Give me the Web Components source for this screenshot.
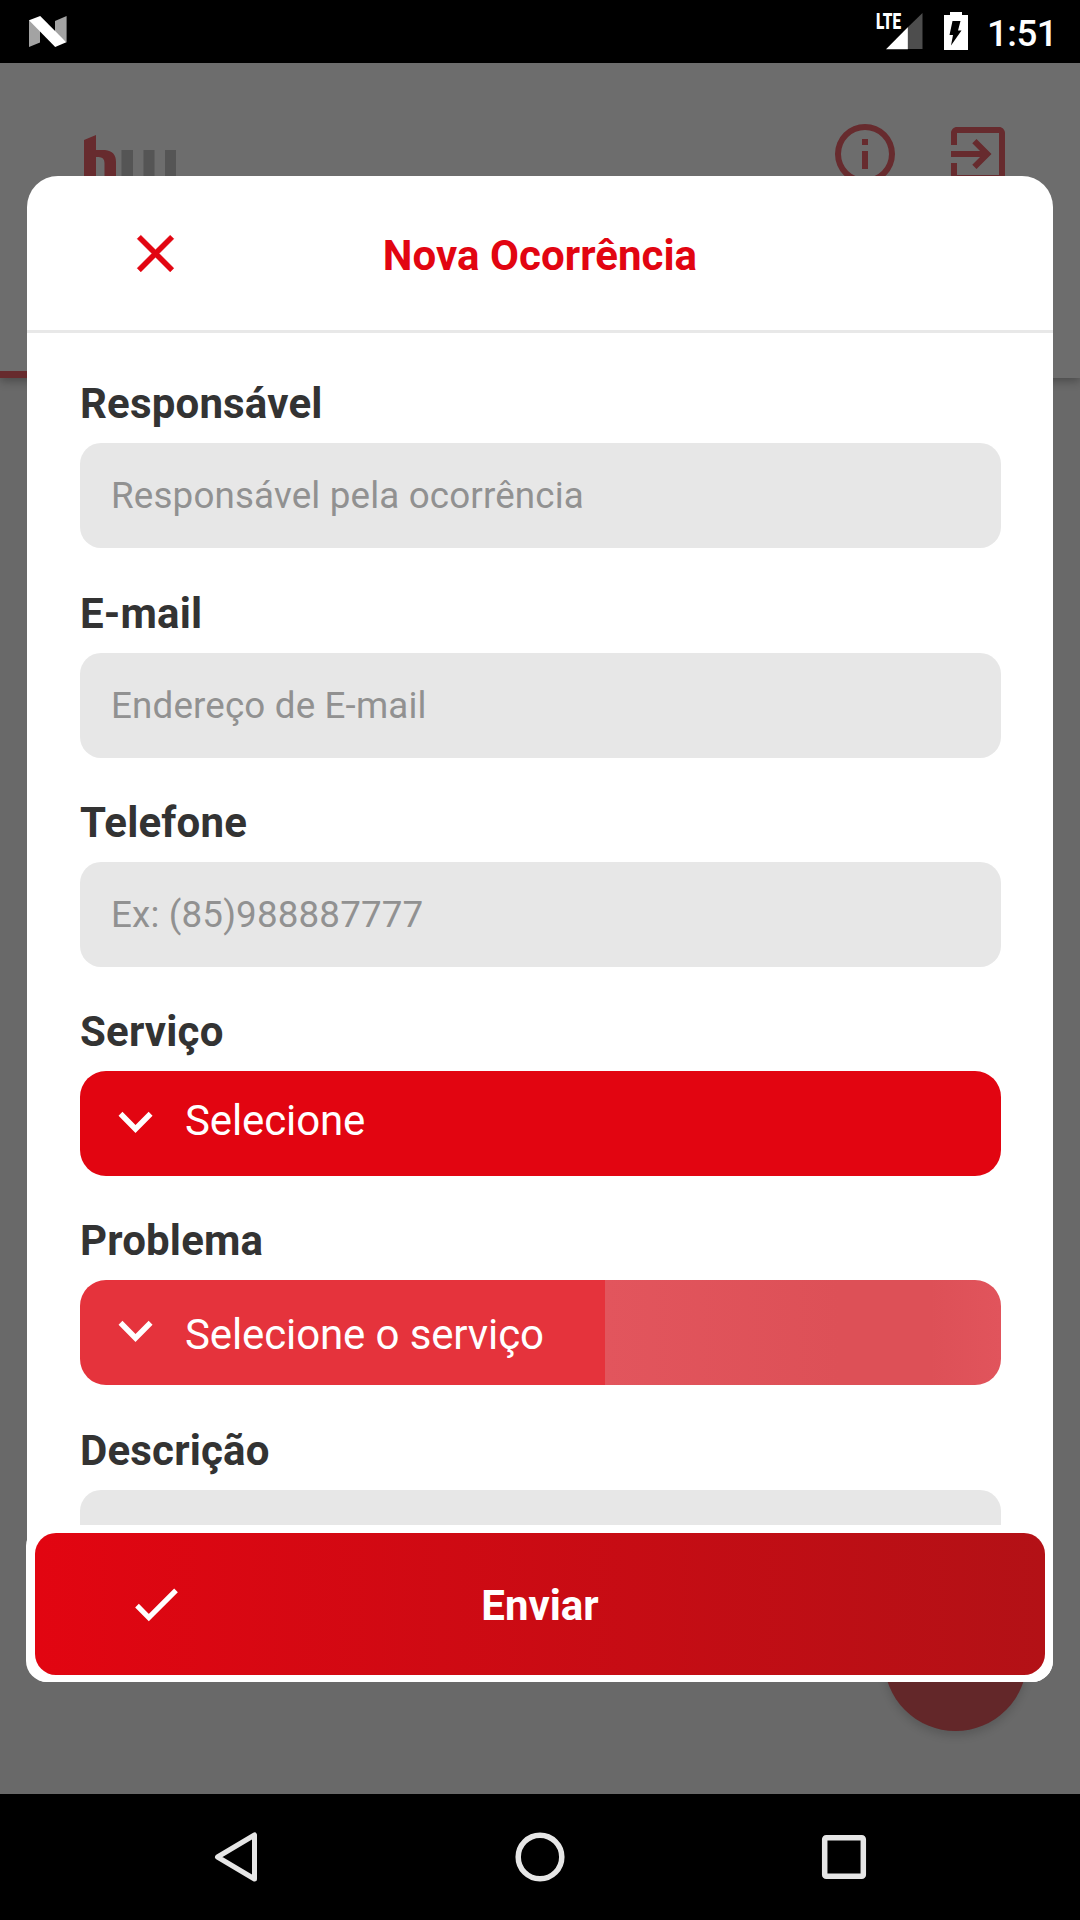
<!DOCTYPE html>
<html lang="pt-BR">
<head>
<meta charset="utf-8">
<title>Nova Ocorrência</title>
<style>
	html, body {
		margin: 0;
		height: 100%;
	}
	body {
		font-family: Roboto, "Liberation Sans", sans-serif;
		background: #000;
		overflow: hidden;
	}
</style>
</head>
<body>
<phone-screen>
	<status-bar slot="status" time="1:51"></status-bar>
	<app-header></app-header>
	<fab-button></fab-button>
	<modal-card slot="modal" heading="Nova Ocorrência">
		<form-field label="Responsável"><text-field>Responsável pela ocorrência</text-field></form-field>
		<form-field label="E-mail"><text-field>Endereço de E-mail</text-field></form-field>
		<form-field label="Telefone"><text-field>Ex: (85)988887777</text-field></form-field>
		<form-field label="Serviço"><select-button>Selecione</select-button></form-field>
		<form-field label="Problema"><select-button disabled>Selecione o serviço</select-button></form-field>
		<form-field label="Descrição"><text-field></text-field></form-field>
		<submit-button slot="footer">Enviar</submit-button>
	</modal-card>
	<nav-bar slot="nav"></nav-bar>
</phone-screen>

<script>
// Attaches an open shadow root to the element and fills it with the markup
function render(el, html) {
	const template = document.createElement('template');
	template.innerHTML = html;
	el.attachShadow({mode: 'open'}).appendChild(template.content.cloneNode(true));
}

// Whole device screen: status bar, app content, navigation bar
class PhoneScreen extends HTMLElement {
	constructor() {
		super();
		render(this, `
			<style>
				:host {
					display: flex;
					flex-direction: column;
					width: 1080px;
					height: 1920px;
					background: #000;
				}
				main {
					flex: 1;
					position: relative;
					background: #696969;
				}
			</style>
			<slot name="status"></slot>
			<main>
				<slot></slot>
				<slot name="modal"></slot>
			</main>
			<slot name="nav"></slot>
		`);
	}
}
customElements.define('phone-screen', PhoneScreen);

class StatusBar extends HTMLElement {
	constructor() {
		super();
		render(this, `
			<style>
				:host {
					display: flex;
					height: 63px;
					box-sizing: border-box;
					padding: 0 23px 0 28px;
					color: #fff;
				}
				.icons {
					display: flex;
					margin-left: auto;
				}
				svg { display: block; }
				.battery { margin: 0 18px 0 20px; }
				.time {
					font-size: 36.75px;
					font-weight: 500;
					line-height: 43px;
					letter-spacing: -.6px;
					padding-top: 12px;
				}
			</style>
			<svg width="40" height="63" viewBox="0 0 40 63">
				<path fill="#a3a3a3" d="M1 20l11 7v15.500L1 47zM27 21l11.600-5v26.500L27 33z"/>
				<path fill="#fff" d="M1 20.200L12.200 16 38.300 42.300 27.200 47z"/>
			</svg>
			<div class="icons">
				<svg width="48" height="63" viewBox="0 0 48 63">
					<path fill="#4d4d4d" d="M47.500 13v36H32V28z"/>
					<path fill="#fff" d="M32.800 27.300V49.300H11z"/>
					<text x="1" y="29" font-size="21.500" font-weight="900" fill="#fff" textLength="25" lengthAdjust="spacingAndGlyphs">LTE</text>
				</svg>
				<svg class="battery" width="26" height="63" viewBox="0 0 26 63">
					<path fill="#fff" d="M7 12h12v3h6v35H1V15h6z"/>
					<path fill="#000" d="M9.500 21h8l-2.500 9.500h3.500L8 45.500l2-10.500H6.500z"/>
				</svg>
				<span class="time"></span>
			</div>
		`);
		this.shadowRoot.querySelector('.time').textContent = this.getAttribute('time');
	}
}
customElements.define('status-bar', StatusBar);

// App bar behind the modal, with the selected tab indicator at the bottom
class AppHeader extends HTMLElement {
	constructor() {
		super();
		render(this, `
			<style>
				:host {
					display: flex;
					flex-direction: column;
					justify-content: space-between;
					height: 315px;
					background: #6d6d6d;
					box-shadow: 0 3px 9px rgba(0, 0, 0, .3);
				}
				.bar {
					display: flex;
					align-items: flex-start;
					padding: 55px 66px 0 84px;
				}
				.logo { margin-top: 16px; }
				.info { margin-left: auto; }
				.exit { margin-left: 41px; }
				.indicator {
					width: 540px;
					height: 7px;
					background: #672b2e;
				}
				svg { display: block; }
			</style>
			<div class="bar">
				<svg class="logo" width="94" height="56" viewBox="0 0 94 56">
					<path fill="#672b2e" d="M0 6L12 1v15h9q11 1 11 12v28H20.500V29q0-6-6-6H12v33H0z"/>
					<path fill="#555" d="M37.500 16h11.500v40H37.500zM59.500 16h11v40h-11zM81 16h11v40H81z"/>
				</svg>
				<svg class="info" width="72" height="72" viewBox="0 0 24 24" fill="#672b2e">
					<path d="M11 7h2v2h-2zm0 4h2v6h-2zm1-9a10 10 0 1 0 0 20 10 10 0 0 0 0-20zm0 18a8 8 0 1 1 0-16 8 8 0 0 1 0 16z"/>
				</svg>
				<svg class="exit" width="72" height="72" viewBox="0 0 24 24" fill="#672b2e">
					<path d="M10.090 15.590L11.500 17l5-5-5-5-1.410 1.410L12.670 11H3v2h9.670zM19 3H5c-1.110 0-2 .9-2 2v4h2V5h14v14H5v-4H3v4c0 1.100.890 2 2 2h14c1.100 0 2-.9 2-2V5c0-1.100-.9-2-2-2z"/>
				</svg>
			</div>
			<div class="indicator"></div>
		`);
	}
}
customElements.define('app-header', AppHeader);

class FabButton extends HTMLElement {
	constructor() {
		super();
		render(this, `
			<style>
				:host {
					position: absolute;
					right: 53px;
					bottom: 63px;
					width: 143px;
					height: 143px;
					border-radius: 50%;
					background: #632729;
					box-shadow: 0 5px 8px rgba(0, 0, 0, .15);
				}
			</style>
		`);
	}
}
customElements.define('fab-button', FabButton);

// White dialog: heading on top, clipped form in the middle, footer slot
class ModalCard extends HTMLElement {
	constructor() {
		super();
		render(this, `
			<style>
				:host {
					position: absolute;
					inset: 113px 27px 112px 27px;
					display: flex;
					flex-direction: column;
					background: #fff;
					border-radius: 31px 31px 21px 21px;
				}
				header {
					display: grid;
					grid-template-columns: 210px 1fr 210px;
					align-items: center;
					height: 154px;
					border-bottom: 3px solid #e8e8e8;
					color: #e20511;
				}
				header svg {
					display: block;
					margin-left: 97px;
				}
				h1 {
					margin: 0;
					padding-top: 4px;
					font-size: 42px;
					line-height: 49px;
					font-weight: 700;
					letter-spacing: .05px;
					text-align: center;
				}
				.body {
					flex: 1;
					min-height: 0;
					overflow: hidden;
					box-sizing: border-box;
					padding: 46px 52px 0 53px;
				}
			</style>
			<header>
				<svg width="63" height="63" viewBox="0 0 24 24" fill="currentColor" stroke="currentColor" stroke-width=".15">
					<path d="M19 6.410L17.590 5 12 10.590 6.410 5 5 6.410 10.590 12 5 17.590 6.410 19 12 13.410 17.590 19 19 17.590 13.410 12z"/>
				</svg>
				<h1></h1>
			</header>
			<div class="body"><slot></slot></div>
			<slot name="footer"></slot>
		`);
		this.shadowRoot.querySelector('h1').textContent = this.getAttribute('heading');
	}
}
customElements.define('modal-card', ModalCard);

class FormField extends HTMLElement {
	constructor() {
		super();
		render(this, `
			<style>
				:host {
					display: block;
					margin-bottom: 40px;
				}
				:host(:nth-of-type(4n + 1)) { margin-bottom: 41px; }
				label {
					display: block;
					margin-bottom: 15px;
					font-size: 42px;
					line-height: 49px;
					font-weight: 700;
					letter-spacing: .18px;
					color: #333;
				}
			</style>
			<label></label>
			<slot></slot>
		`);
		this.shadowRoot.querySelector('label').textContent = this.getAttribute('label');
	}
}
customElements.define('form-field', FormField);

class TextField extends HTMLElement {
	constructor() {
		super();
		render(this, `
			<style>
				:host {
					display: flex;
					align-items: center;
					height: 105px;
					box-sizing: border-box;
					padding: 0 31px;
					border-radius: 21px;
					background: #e7e7e7;
					color: #919191;
					font-size: 36.75px;
					line-height: 43px;
					letter-spacing: .16px;
				}
			</style>
			<span><slot></slot></span>
		`);
	}
}
customElements.define('text-field', TextField);

class SelectButton extends HTMLElement {
	constructor() {
		super();
		render(this, `
			<style>
				:host {
					display: flex;
					align-items: flex-start;
					height: 105px;
					box-sizing: border-box;
					padding: 25px 24px 0;
					border-radius: 26px;
					background: #e20511;
					color: #fff;
					font-size: 42px;
					line-height: 49px;
					letter-spacing: -.12px;
				}
				:host([disabled]) {
					background: linear-gradient(90deg, #e5333c 525px, #e2555d 525px, #dd5057 760px, #dd5057 850px, #e1545c);
				}
				:host([disabled]) span { padding-top: 5px; }
				svg {
					display: block;
					margin: 2px 25px 0 7px;
					flex: none;
				}
			</style>
			<svg width="49" height="49" viewBox="0 0 49 49" fill="none" stroke="currentColor" stroke-width="5.500">
				<path d="M9.500 15.800L24.500 31 39.600 15.800"/>
			</svg>
			<span><slot></slot></span>
		`);
	}
}
customElements.define('select-button', SelectButton);

class SubmitButton extends HTMLElement {
	constructor() {
		super();
		render(this, `
			<style>
				:host {
					display: block;
					flex: none;
					margin-left: -1px;
					padding: 8px 8px 7px 9px;
					border-radius: 21px;
					background: #fff;
				}
				.button {
					display: grid;
					grid-template-columns: 210px 1fr 210px;
					align-items: center;
					height: 142px;
					border-radius: 21px;
					background: linear-gradient(90deg, #e20511, #b31116);
					color: #fff;
				}
				svg {
					display: block;
					margin-left: 90px;
				}
				span {
					padding-top: 2px;
					font-size: 42px;
					line-height: 49px;
					font-weight: 700;
					text-align: center;
				}
			</style>
			<div class="button">
				<svg width="63" height="63" viewBox="0 0 63 63" fill="none" stroke="currentColor" stroke-width="5.200">
					<path d="M12 32.700L23.800 44.500 51 17.300"/>
				</svg>
				<span><slot></slot></span>
			</div>
		`);
	}
}
customElements.define('submit-button', SubmitButton);

// Android back / home / recents
class NavBar extends HTMLElement {
	constructor() {
		super();
		render(this, `
			<style>
				:host {
					display: flex;
					justify-content: center;
					align-items: center;
					gap: 240px;
					height: 126px;
				}
				svg { display: block; }
			</style>
			<svg width="64" height="64" viewBox="0 0 64 64" fill="none" stroke="#e6e6e6" stroke-width="5" stroke-linejoin="round">
				<path d="M50.500 10v44L13.500 32z"/>
			</svg>
			<svg width="64" height="64" viewBox="0 0 64 64" fill="none" stroke="#e6e6e6" stroke-width="5.500">
				<circle cx="32" cy="32" r="21.800"/>
			</svg>
			<svg width="64" height="64" viewBox="0 0 64 64" fill="none" stroke="#e6e6e6" stroke-width="5.500">
				<rect x="12.700" y="12.700" width="38.600" height="38.600" rx="1.500"/>
			</svg>
		`);
	}
}
customElements.define('nav-bar', NavBar);
</script>
</body>
</html>
